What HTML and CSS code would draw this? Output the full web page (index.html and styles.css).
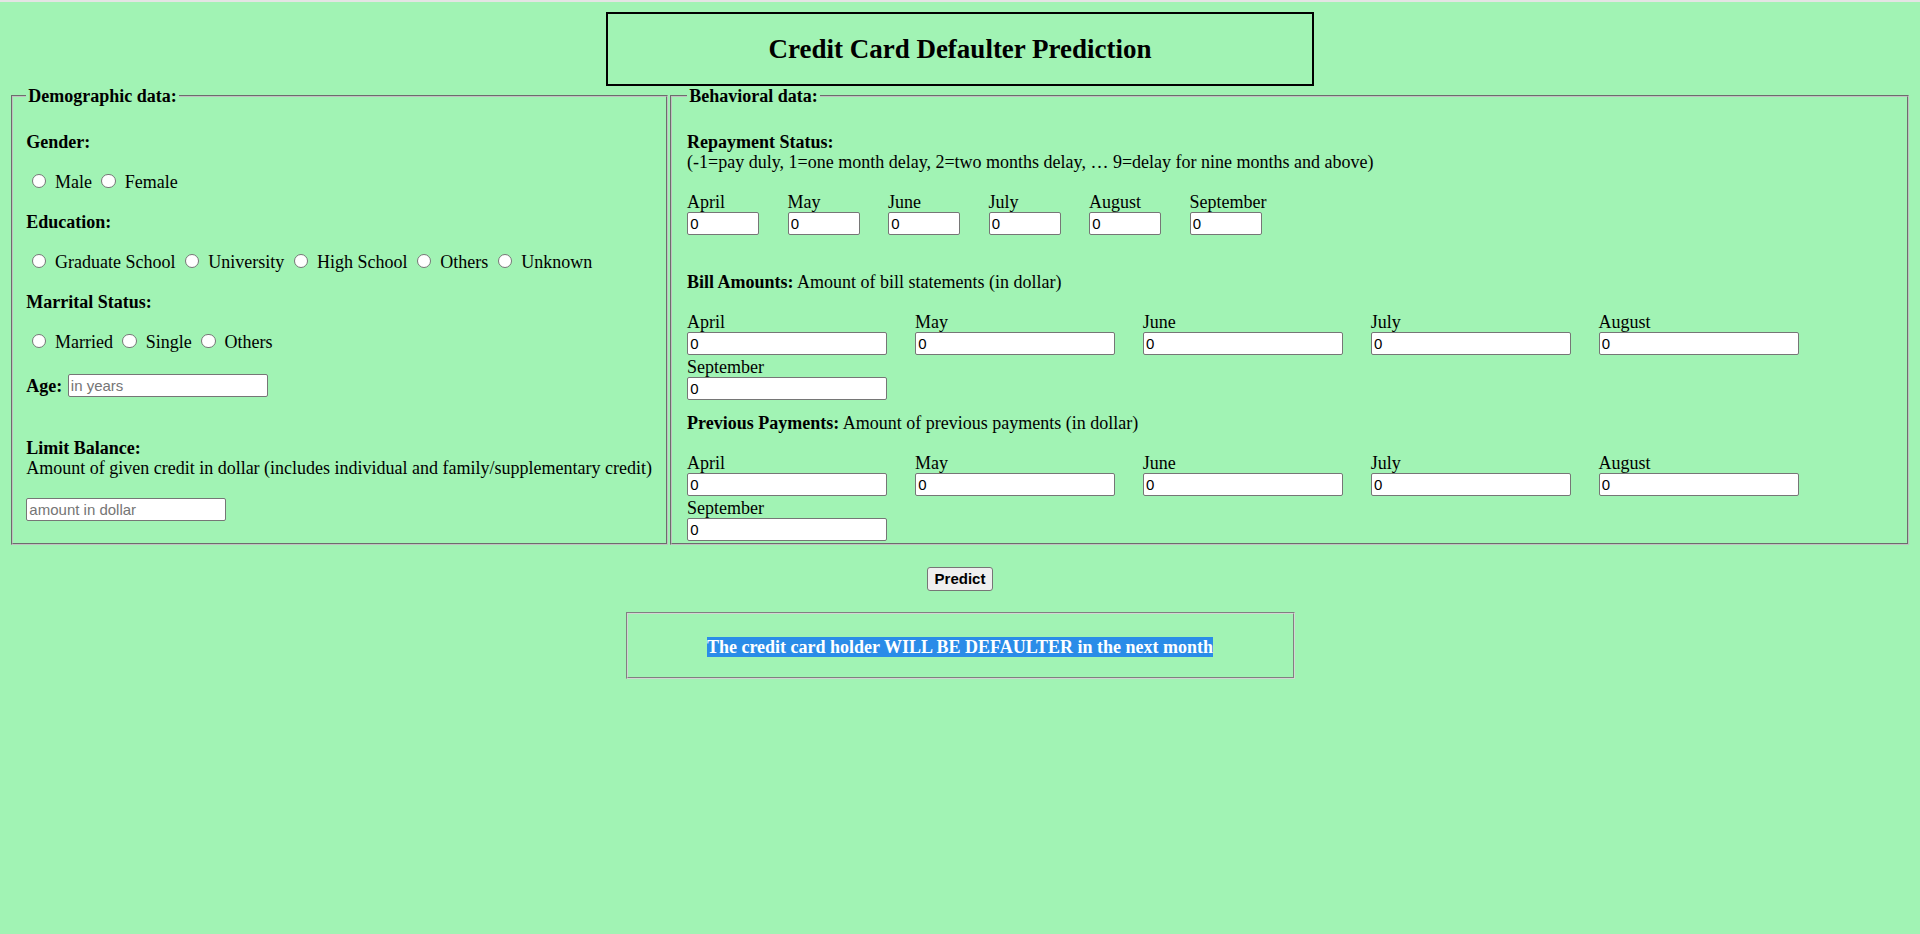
FILE: index.html
```html
<!DOCTYPE html>
<html lang="en">
<head>
<meta charset="utf-8">
<title>Credit Card Defaulter Prediction</title>
<link rel="stylesheet" href="styles.css">
</head>
<body>
<div class="topbar"></div>
<main class="page">
  <h1 class="title">Credit Card Defaulter Prediction</h1>
  <form class="form">
    <div class="sections">
      <fieldset class="group group-demo">
        <legend class="legend">Demographic data:</legend>
        <h4 class="q q-first">Gender:</h4>
        <div class="options">
          <input class="radio" type="radio" name="sex"> Male <input class="radio" type="radio" name="sex"> Female
        </div>
        <h4 class="q">Education:</h4>
        <div class="options">
          <input class="radio" type="radio" name="edu"> Graduate School <input class="radio" type="radio" name="edu"> University <input class="radio" type="radio" name="edu"> High School <input class="radio" type="radio" name="edu"> Others <input class="radio" type="radio" name="edu"> Unknown
        </div>
        <h4 class="q">Marrital Status:</h4>
        <div class="options">
          <input class="radio" type="radio" name="mar"> Married <input class="radio" type="radio" name="mar"> Single <input class="radio" type="radio" name="mar"> Others
        </div>
        <div class="age-row">
          <b>Age:</b>
          <input class="field field-wide" type="text" placeholder="in years">
        </div>
        <p class="desc desc-limit"><b>Limit Balance:</b><br>Amount of given credit in dollar (includes individual and family/supplementary credit)</p>
        <input class="field field-wide field-limit" type="text" placeholder="amount in dollar">
      </fieldset>

      <fieldset class="group group-beh">
        <legend class="legend">Behavioral data:</legend>
        <p class="desc desc-repay"><b>Repayment Status:</b><br>(-1=pay duly, 1=one month delay, 2=two months delay, … 9=delay for nine months and above)</p>
        <div class="months months-small">
          <div class="month"><span class="mlabel">April</span><input class="field field-small" type="text" value="0"></div>
          <div class="month"><span class="mlabel">May</span><input class="field field-small" type="text" value="0"></div>
          <div class="month"><span class="mlabel">June</span><input class="field field-small" type="text" value="0"></div>
          <div class="month"><span class="mlabel">July</span><input class="field field-small" type="text" value="0"></div>
          <div class="month"><span class="mlabel">August</span><input class="field field-small" type="text" value="0"></div>
          <div class="month"><span class="mlabel">September</span><input class="field field-small" type="text" value="0"></div>
        </div>

        <p class="desc desc-bill"><b>Bill Amounts:</b> Amount of bill statements (in dollar)</p>
        <div class="months months-wide months-bill">
          <div class="month"><span class="mlabel">April</span><input class="field field-wide" type="text" value="0"></div>
          <div class="month"><span class="mlabel">May</span><input class="field field-wide" type="text" value="0"></div>
          <div class="month"><span class="mlabel">June</span><input class="field field-wide" type="text" value="0"></div>
          <div class="month"><span class="mlabel">July</span><input class="field field-wide" type="text" value="0"></div>
          <div class="month"><span class="mlabel">August</span><input class="field field-wide" type="text" value="0"></div>
          <div class="month"><span class="mlabel">September</span><input class="field field-wide" type="text" value="0"></div>
        </div>

        <p class="desc desc-prev"><b>Previous Payments:</b> Amount of previous payments (in dollar)</p>
        <div class="months months-wide months-prev">
          <div class="month"><span class="mlabel">April</span><input class="field field-wide" type="text" value="0"></div>
          <div class="month"><span class="mlabel">May</span><input class="field field-wide" type="text" value="0"></div>
          <div class="month"><span class="mlabel">June</span><input class="field field-wide" type="text" value="0"></div>
          <div class="month"><span class="mlabel">July</span><input class="field field-wide" type="text" value="0"></div>
          <div class="month"><span class="mlabel">August</span><input class="field field-wide" type="text" value="0"></div>
          <div class="month"><span class="mlabel">September</span><input class="field field-wide" type="text" value="0"></div>
        </div>
      </fieldset>
    </div>
    <div class="actions">
      <button class="predict" type="button">Predict</button>
    </div>
  </form>
  <div class="result">
    <span class="result-text">The credit card holder WILL BE DEFAULTER in the next month</span>
  </div>
</main>
</body>
</html>
```

FILE: styles.css
```css
* {
  box-sizing: border-box;
}

html,
body {
  margin: 0;
  padding: 0;
}

body {
  background: #a1f3b4;
  font-family: "Liberation Serif", "Times New Roman", serif;
  font-size: 18px;
  color: #000;
}

.topbar {
  height: 2px;
  background: #e4e4e4;
}

.page {
  padding: 0 8.8px;
}

.title {
  width: 708px;
  height: 74px;
  margin: 10.2px auto 0;
  border: 2.2px solid #000;
  display: flex;
  align-items: center;
  justify-content: center;
  font-size: 27px;
  font-weight: bold;
  line-height: 30px;
}

.form {
  margin: 0;
}

.sections {
  display: flex;
  align-items: stretch;
}

.group {
  margin: 0;
  border: 2.2px groove #c0c0c0;
  min-width: 0;
}

.group-demo {
  flex: 0 0 656.7px;
  width: 656.7px;
  margin: 0 2.2px;
  padding: 0 13.2px 2.5px 13.2px;
}

.group-beh {
  flex: 1 1 auto;
  margin: 0 2.2px 0 0;
  padding: 0 13.2px 2.5px 15.2px;
}

.legend {
  padding: 0 2.2px;
  font-weight: bold;
  font-size: 18px;
  line-height: 20.2px;
}

.q {
  margin: 19.1px 0 0;
  font-size: 18px;
  font-weight: bold;
  line-height: 20.2px;
}

.q-first {
  margin-top: 25.2px;
}

.options {
  margin-top: 20.5px;
  line-height: 20.2px;
  white-space: nowrap;
}

.radio {
  -webkit-appearance: none;
  appearance: none;
  display: inline-block;
  width: 14.3px;
  height: 14.3px;
  margin: 0 4.5px 0 5px;
  border: 1px solid #767676;
  border-radius: 50%;
  background: #fff;
  vertical-align: baseline;
}

.radio:first-child {
  margin-left: 5.5px;
}

.age-row {
  display: flex;
  align-items: center;
  gap: 5.5px;
  height: 23px;
  margin-top: 21.8px;
  line-height: 20.2px;
}

.desc {
  margin: 0;
  line-height: 20.2px;
}

.desc-limit {
  margin-top: 40.3px;
}

.field {
  display: block;
  height: 23px;
  padding: 1px 2.2px;
  border: 1px solid #767676;
  border-radius: 2px;
  background: #fff;
  font-family: "Liberation Sans", Arial, sans-serif;
  font-size: 15px;
  color: #000;
}

.field::placeholder {
  color: #757575;
}

.field-wide {
  width: 200px;
}

.field-small {
  width: 72px;
}

.field-limit {
  margin-top: 20px;
}

.desc-repay {
  margin-top: 25.2px;
}

.months {
  display: flex;
  flex-wrap: wrap;
  row-gap: 1.8px;
}

.months-small {
  margin-top: 19.6px;
  column-gap: 28.5px;
}

.months-wide {
  column-gap: 27.9px;
}

.month {
  display: flex;
  flex-direction: column;
}

.mlabel {
  line-height: 20.2px;
  white-space: nowrap;
}

.desc-bill {
  margin-top: 37.6px;
}

.months-bill {
  margin-top: 19px;
}

.desc-prev {
  margin-top: 13.4px;
}

.months-prev {
  margin-top: 19.2px;
}

.actions {
  display: flex;
  justify-content: center;
  margin-top: 21.8px;
}

.predict {
  height: 23.5px;
  padding: 1px 6.6px;
  border: 1px solid #767676;
  border-radius: 3px;
  background: #efefef;
  font-family: "Liberation Sans", Arial, sans-serif;
  font-size: 15px;
  font-weight: bold;
  color: #000;
}

.result {
  width: 669px;
  height: 66.7px;
  margin: 21.5px auto 0;
  padding-top: 2.5px;
  border: 2px groove #d4d4d4;
  display: flex;
  align-items: center;
  justify-content: center;
}

.result-text {
  background: #2a8ce8;
  color: #fff;
  font-weight: bold;
  font-size: 18px;
  line-height: 20.2px;
}
```
